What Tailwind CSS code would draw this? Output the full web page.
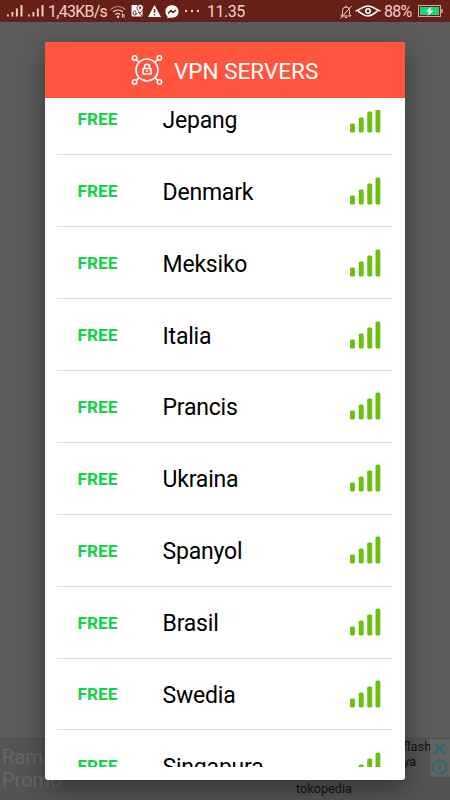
<!DOCTYPE html>
<html lang="id">
<head>
    <meta charset="UTF-8">
    <meta name="viewport" content="width=device-width, initial-scale=1.0">
    <title>VPN Servers</title>
    <script src="https://cdn.jsdelivr.net/npm/@tailwindcss/browser@4"></script>
</head>
<body class="relative flex h-screen flex-col overflow-hidden bg-[#5c5c5c] font-[Roboto,sans-serif]">

    <!-- Status bar -->
    <header class="flex h-[22px] w-full shrink-0 items-center bg-[#672018] pl-[7px] pr-[6px] text-base leading-[22px] text-[#f3cfc8]">
        <svg class="h-3 w-4 shrink-0" viewBox="0 0 16 12" fill="currentColor">
            <path d="M0 9.500h1.800v2H0zM4.500 7h1.800v4.500H4.500zM8.900 3.500h1.900v8H8.900zM13.500 0h2v11.500h-2z"/>
        </svg>
        <svg class="ml-[5px] h-3 w-4 shrink-0" viewBox="0 0 16 12" fill="currentColor">
            <path d="M0 9.500h1.800v2H0zM4.500 7h1.800v4.500H4.500zM8.900 3.500h1.900v8H8.900zM13.500 0h2v11.500h-2z"/>
        </svg>
        <span class="ml-[4px] mt-px w-[60px] shrink-0 whitespace-nowrap tracking-[-0.75px]">1,43KB/s</span>
        <!-- Wifi -->
        <svg class="ml-[2px] mt-0.5 h-[14px] w-4 shrink-0" viewBox="0 0 16 14" fill="none" stroke="currentColor" stroke-width="1.2">
            <path d="M.7 4.500C5 .5 11 .5 15.300 4.500" opacity=".6"/>
            <path d="M3 7c3-2.700 7-2.700 10 0M5.300 9.500c1.500-1.300 3.600-1.300 5 0"/>
            <circle cx="8" cy="11.700" r=".7" fill="currentColor"/>
            <path d="M12.500 8.500v4M14 9v3.500" stroke-width="1"/>
        </svg>
        <!-- Maps -->
        <svg class="ml-[5px] h-[14px] w-[13px] shrink-0" viewBox="0 0 13 14">
            <rect x=".5" y="1" width="11" height="11.500" rx="1" fill="#fff"/>
            <path d="M5.800 9.300H4M5.800 9.300a1.900 1.900 0 1 1-.7-1.800M7.500 8l3.500 4" fill="none" stroke="#672018" stroke-width="1"/>
            <path d="M9 9C7 6.500 6 5.500 6 3.700a3.200 3.200 0 0 1 6.400 0C12.400 5.500 11 6.500 9 9z" fill="#fff" stroke="#672018" stroke-width=".8"/>
            <circle cx="9.200" cy="3.700" r="1.200" fill="#672018"/>
        </svg>
        <!-- Warning -->
        <svg class="ml-[4px] h-3 w-[13px] shrink-0" viewBox="0 0 13 12">
            <path d="M6.500 0 13 12H0z" fill="#fff"/>
            <path d="M6.500 4v4M6.500 9v1.500" stroke="#672018" stroke-width="1.400"/>
        </svg>
        <!-- Messenger -->
        <svg class="ml-[4px] mt-px h-[14px] w-[14px] shrink-0" viewBox="0 0 14 14">
            <path d="M7 .3C3.200.3.400 3 .4 6.600c0 2 .8 3.600 2.100 4.800v2.200l2.100-1.100c.8.2 1.600.3 2.400.3 3.800 0 6.600-2.700 6.600-6.200S10.800.3 7 .3z" fill="#fff"/>
            <path d="m3 8.500 3-3 2 2 3-2.500" fill="none" stroke="#672018" stroke-width="1.500"/>
        </svg>
        <svg class="ml-[5px] h-1 w-4 shrink-0" viewBox="0 0 16 4" fill="currentColor">
            <circle cx="2" cy="2" r="1.200"/><circle cx="8" cy="2" r="1.200"/><circle cx="14" cy="2" r="1.200"/>
        </svg>
        <span class="ml-[7px] mt-px text-[16px] tracking-[-0.5px]">11.35</span>
        <!-- Muted bell -->
        <svg class="ml-auto mt-px h-[14px] w-3 shrink-0" viewBox="0 0 12 14" fill="none" stroke="currentColor" stroke-width="1">
            <path d="M1 11h10L9.500 9V5.500a3.500 3.500 0 0 0-7 0V9zM5 12.500h2M6 .5V2M11.500 1 .5 13.500"/>
        </svg>
        <!-- Eye -->
        <svg class="ml-[3px] h-3 w-[26px] shrink-0" viewBox="0 0 26 12" fill="none" stroke="#fff" stroke-width="1.500">
            <path d="M.5 6C5 5.500 7 1 13 1s8 4.500 12.500 5M3 6.200C6.500 7.500 8 11 13 11s7-3.500 9.500-5"/>
            <circle cx="13" cy="6" r="2.300"/>
        </svg>
        <span class="ml-[3px] mt-px w-[28px] shrink-0 whitespace-nowrap tracking-[-0.8px]">88%</span>
        <!-- Battery -->
        <svg class="ml-[6px] h-3 w-[26px] shrink-0" viewBox="0 0 26 12">
            <rect x=".5" y=".5" width="22" height="11" fill="none" stroke="#d9aaa2"/>
            <rect x="2" y="2" width="19" height="8" fill="#17d67c"/>
            <path d="M24 4v4" stroke="#d9aaa2" stroke-width="1.500"/>
            <path d="M13.500 1.500 8 6.500h3.500L9.500 11l6-5.500h-3.500z" fill="#fff"/>
        </svg>
    </header>

    <!-- Dimmed ad banner under the dialog -->
    <div class="relative mt-auto flex h-[62px] w-full shrink-0 border-t border-[#4d4d4d] bg-[#545454]">
        <p class="ml-0.5 mt-[7px] w-24 text-[20px] leading-[23px] text-[#666]">Ramadan Promo</p>
        <div class="ml-[64px] mt-[-10px] h-[46px] w-[46px] rounded-full bg-[#626262]"></div>
        <p class="absolute left-[296px] top-[42px] text-[12.700px] leading-4 text-[#111]">tokopedia</p>
        <p class="absolute left-[403px] top-0 text-[13px] leading-[15px] text-[#111]">flash<br>ya</p>
        <svg class="absolute right-0 top-0 h-[38px] w-5" viewBox="0 0 20 38" fill="none" stroke="#216b73" stroke-width="1.800">
            <path d="M0 0h20v38H0z" fill="#636363" stroke="none"/>
            <path d="m4 4 11 11M15 4 4 15"/>
            <circle cx="9.500" cy="28" r="6.800" stroke-width="1.500"/>
            <path d="M9.500 27v5M9.500 24v1.800"/>
        </svg>
    </div>

    <!-- Server dialog -->
    <main class="absolute left-[45px] top-[42px] flex h-[738px] w-[360px] flex-col overflow-hidden rounded-[3px] bg-white shadow-[0_8px_26px_rgba(0,0,0,0.4)]">
        <div class="flex h-[56px] shrink-0 items-center bg-[#ff543e] pl-[86px] text-white">
            <svg class="h-8 w-8 shrink-0" viewBox="0 0 32 32" fill="none" stroke="currentColor" stroke-width="1.600">
                <circle cx="16" cy="16" r="11"/>
                <circle cx="3.600" cy="4" r="2.200"/><circle cx="28.400" cy="4" r="2.200"/>
                <circle cx="3.600" cy="28" r="2.200"/><circle cx="28.400" cy="28" r="2.200"/>
                <path d="m5.200 5.600 2.900 2.700M26.800 5.600l-2.900 2.700M5.200 26.400l2.900-2.700M26.800 26.400l-2.900-2.700"/>
                <rect x="12" y="14.500" width="8" height="5.500" rx=".5"/>
                <path d="M13.500 14.500v-1.800a2.500 2.500 0 0 1 5 0v1.800M16 16.300v1.800"/>
            </svg>
            <h1 class="ml-[11px] mt-px whitespace-nowrap text-[22.5px] leading-7">VPN SERVERS</h1>
        </div>

        <div class="mb-[13px] mt-[12px] flex min-h-0 flex-1 flex-col overflow-hidden pl-[12px] pr-[13px]">
            <ul id="server-list" class="-mt-[26.6px]"></ul>
        </div>
    </main>

    <template id="server-row">
        <li class="flex h-[71.9px] items-center border-b-[1.5px] border-[#dedede] pl-[20.500px] pr-[11px]">
            <span class="mt-px w-[85px] text-[17.300px] font-bold leading-6 text-[#12d24a]">FREE</span>
            <span class="name mt-[4px] flex-1 text-[23px] leading-7 tracking-[-0.2px] text-black"></span>
            <svg class="h-7 w-[31px] shrink-0" viewBox="0 0 31 28" fill="#6abf10">
                <rect x="0" y="18.500" width="5" height="9" rx="1.500"/>
                <rect x="8.700" y="12.500" width="5" height="15" rx="1.500"/>
                <rect x="17.200" y="6.500" width="5" height="21" rx="1.500"/>
                <rect x="25.500" y=".5" width="4.800" height="27" rx="1.500"/>
            </svg>
        </li>
    </template>

    <script>
        const servers = ['Jepang', 'Denmark', 'Meksiko', 'Italia', 'Prancis', 'Ukraina', 'Spanyol', 'Brasil', 'Swedia', 'Singapura'];
        const list = document.getElementById('server-list');
        const template = document.getElementById('server-row');

        servers.forEach(server => {
            const row = template.content.cloneNode(true);
            row.querySelector('.name').textContent = server;
            list.appendChild(row);
        });
    </script>
</body>
</html>
